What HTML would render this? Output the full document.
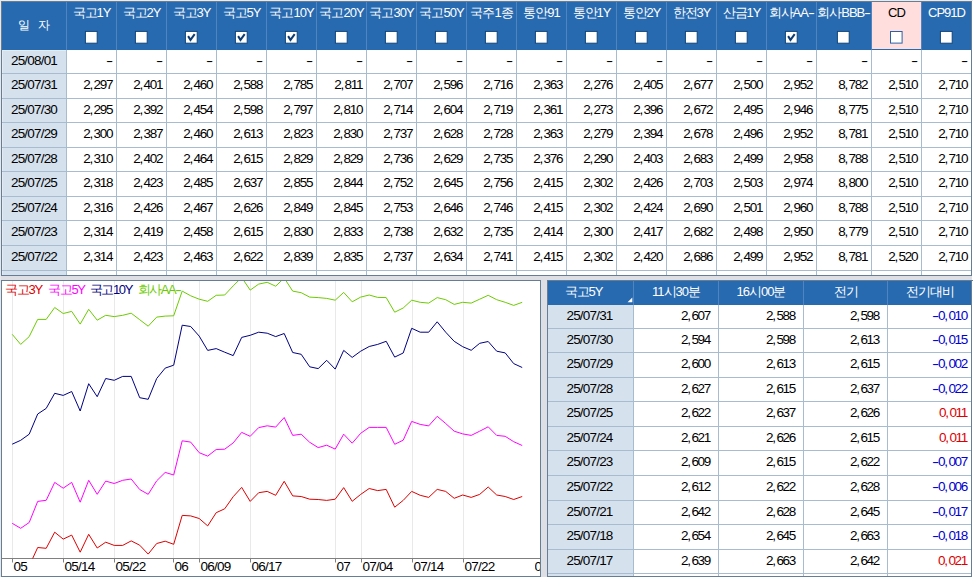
<!DOCTYPE html>
<html lang="ko"><head><meta charset="utf-8"><title>bond yields</title>
<style>
html,body{margin:0;padding:0;}
body{width:973px;height:577px;overflow:hidden;background:#dddfe5;position:relative;
 font-family:"Liberation Sans",sans-serif;font-size:13px;color:#000;}
div,span{position:absolute;box-sizing:border-box;white-space:nowrap;}
.n{font-size:13.5px;letter-spacing:-1.3px;text-align:right;}
.n i{font-style:normal;letter-spacing:0.4px;}
.d{font-size:13.5px;letter-spacing:-0.8px;text-align:center;}
.h{font-size:13px;letter-spacing:-1px;text-align:center;color:#fff;}
b{font-weight:normal;display:inline-block;transform:scaleX(1.6);transform-origin:center;margin:0 2.1px 0 1.1px;}
.neg{color:#0000d0;}
.pos{color:#dd0000;}
svg{position:absolute;overflow:visible;}
.ax{font-size:13.5px;letter-spacing:-0.8px;color:#000;}
.lg{font-size:13px;letter-spacing:-1.4px;}
</style></head><body>

<div style="left:0px;top:0px;width:973px;height:1px;background:#ebebeb;"></div>
<div style="left:0px;top:0px;width:1px;height:577px;background:#e8e8ea;"></div>
<div style="left:1px;top:1px;width:971px;height:275px;background:#fff;border:1px solid #667d96;"></div>
<div style="left:2px;top:2px;width:969px;height:48px;background:#286ab0;"></div>
<div style="left:2px;top:50px;width:64px;height:225px;background:#d5e1ed;"></div>
<div style="left:2px;top:50px;width:64px;height:1px;background:#e4edf6;"></div>
<div style="left:2px;top:50px;width:1px;height:225px;background:#e1ebf5;"></div>
<div style="left:872px;top:2px;width:49px;height:47px;background:#ffdedd;"></div>
<div style="left:66px;top:2px;width:1px;height:48px;background:#4f84c1;"></div>
<div style="left:116px;top:2px;width:1px;height:48px;background:#4f84c1;"></div>
<div style="left:166px;top:2px;width:1px;height:48px;background:#4f84c1;"></div>
<div style="left:216px;top:2px;width:1px;height:48px;background:#4f84c1;"></div>
<div style="left:266px;top:2px;width:1px;height:48px;background:#4f84c1;"></div>
<div style="left:316px;top:2px;width:1px;height:48px;background:#4f84c1;"></div>
<div style="left:366px;top:2px;width:1px;height:48px;background:#4f84c1;"></div>
<div style="left:416px;top:2px;width:1px;height:48px;background:#4f84c1;"></div>
<div style="left:466px;top:2px;width:1px;height:48px;background:#4f84c1;"></div>
<div style="left:516px;top:2px;width:1px;height:48px;background:#4f84c1;"></div>
<div style="left:566px;top:2px;width:1px;height:48px;background:#4f84c1;"></div>
<div style="left:616px;top:2px;width:1px;height:48px;background:#4f84c1;"></div>
<div style="left:666px;top:2px;width:1px;height:48px;background:#4f84c1;"></div>
<div style="left:716px;top:2px;width:1px;height:48px;background:#4f84c1;"></div>
<div style="left:766px;top:2px;width:1px;height:48px;background:#4f84c1;"></div>
<div style="left:816px;top:2px;width:1px;height:48px;background:#4f84c1;"></div>
<div style="left:871px;top:2px;width:1px;height:48px;background:#4f84c1;"></div>
<div style="left:921px;top:2px;width:1px;height:48px;background:#4f84c1;"></div>
<div style="left:66px;top:50px;width:1px;height:225px;background:#a8bcd0;"></div>
<div style="left:116px;top:50px;width:1px;height:225px;background:#a8bcd0;"></div>
<div style="left:166px;top:50px;width:1px;height:225px;background:#a8bcd0;"></div>
<div style="left:216px;top:50px;width:1px;height:225px;background:#a8bcd0;"></div>
<div style="left:266px;top:50px;width:1px;height:225px;background:#a8bcd0;"></div>
<div style="left:316px;top:50px;width:1px;height:225px;background:#a8bcd0;"></div>
<div style="left:366px;top:50px;width:1px;height:225px;background:#a8bcd0;"></div>
<div style="left:416px;top:50px;width:1px;height:225px;background:#a8bcd0;"></div>
<div style="left:466px;top:50px;width:1px;height:225px;background:#a8bcd0;"></div>
<div style="left:516px;top:50px;width:1px;height:225px;background:#a8bcd0;"></div>
<div style="left:566px;top:50px;width:1px;height:225px;background:#a8bcd0;"></div>
<div style="left:616px;top:50px;width:1px;height:225px;background:#a8bcd0;"></div>
<div style="left:666px;top:50px;width:1px;height:225px;background:#a8bcd0;"></div>
<div style="left:716px;top:50px;width:1px;height:225px;background:#a8bcd0;"></div>
<div style="left:766px;top:50px;width:1px;height:225px;background:#a8bcd0;"></div>
<div style="left:816px;top:50px;width:1px;height:225px;background:#a8bcd0;"></div>
<div style="left:871px;top:50px;width:1px;height:225px;background:#a8bcd0;"></div>
<div style="left:921px;top:50px;width:1px;height:225px;background:#a8bcd0;"></div>
<div style="left:2px;top:73px;width:969px;height:1px;background:#a8bcd0;"></div>
<div style="left:2px;top:98px;width:969px;height:1px;background:#a8bcd0;"></div>
<div style="left:2px;top:122px;width:969px;height:1px;background:#a8bcd0;"></div>
<div style="left:2px;top:147px;width:969px;height:1px;background:#a8bcd0;"></div>
<div style="left:2px;top:171px;width:969px;height:1px;background:#a8bcd0;"></div>
<div style="left:2px;top:196px;width:969px;height:1px;background:#a8bcd0;"></div>
<div style="left:2px;top:220px;width:969px;height:1px;background:#a8bcd0;"></div>
<div style="left:2px;top:245px;width:969px;height:1px;background:#a8bcd0;"></div>
<div style="left:2px;top:270px;width:969px;height:1px;background:#a8bcd0;"></div>
<div class="h" style="left:2px;top:2px;width:64px;height:48px;line-height:46px;letter-spacing:0.4px;font-size:12px;">일&nbsp; 자</div>
<div class="h" style="left:67px;top:5px;width:49px;height:16px;line-height:16px;color:#fff;">국고1Y</div>
<svg style="left:85.2px;top:31.15px" width="12.6" height="12.6" viewBox="0 0 12.6 12.6"><rect x="0.4" y="0.4" width="11.8" height="11.8" fill="#fff" stroke="#12447a" stroke-width="1"/></svg>
<div class="h" style="left:117px;top:5px;width:49px;height:16px;line-height:16px;color:#fff;">국고2Y</div>
<svg style="left:135.2px;top:31.15px" width="12.6" height="12.6" viewBox="0 0 12.6 12.6"><rect x="0.4" y="0.4" width="11.8" height="11.8" fill="#fff" stroke="#12447a" stroke-width="1"/></svg>
<div class="h" style="left:167px;top:5px;width:49px;height:16px;line-height:16px;color:#fff;">국고3Y</div>
<svg style="left:185.2px;top:31.15px" width="12.6" height="12.6" viewBox="0 0 12.6 12.6"><rect x="0.4" y="0.4" width="11.8" height="11.8" fill="#fff" stroke="#12447a" stroke-width="1"/><path d="M3.1 5.1 L5.5 8.9 L9.7 3.2" fill="none" stroke="#0c3c72" stroke-width="2"/></svg>
<div class="h" style="left:217px;top:5px;width:49px;height:16px;line-height:16px;color:#fff;">국고5Y</div>
<svg style="left:235.2px;top:31.15px" width="12.6" height="12.6" viewBox="0 0 12.6 12.6"><rect x="0.4" y="0.4" width="11.8" height="11.8" fill="#fff" stroke="#12447a" stroke-width="1"/><path d="M3.1 5.1 L5.5 8.9 L9.7 3.2" fill="none" stroke="#0c3c72" stroke-width="2"/></svg>
<div class="h" style="left:267px;top:5px;width:49px;height:16px;line-height:16px;color:#fff;">국고10Y</div>
<svg style="left:285.2px;top:31.15px" width="12.6" height="12.6" viewBox="0 0 12.6 12.6"><rect x="0.4" y="0.4" width="11.8" height="11.8" fill="#fff" stroke="#12447a" stroke-width="1"/><path d="M3.1 5.1 L5.5 8.9 L9.7 3.2" fill="none" stroke="#0c3c72" stroke-width="2"/></svg>
<div class="h" style="left:317px;top:5px;width:49px;height:16px;line-height:16px;color:#fff;">국고20Y</div>
<svg style="left:335.2px;top:31.15px" width="12.6" height="12.6" viewBox="0 0 12.6 12.6"><rect x="0.4" y="0.4" width="11.8" height="11.8" fill="#fff" stroke="#12447a" stroke-width="1"/></svg>
<div class="h" style="left:367px;top:5px;width:49px;height:16px;line-height:16px;color:#fff;">국고30Y</div>
<svg style="left:385.2px;top:31.15px" width="12.6" height="12.6" viewBox="0 0 12.6 12.6"><rect x="0.4" y="0.4" width="11.8" height="11.8" fill="#fff" stroke="#12447a" stroke-width="1"/></svg>
<div class="h" style="left:417px;top:5px;width:49px;height:16px;line-height:16px;color:#fff;">국고50Y</div>
<svg style="left:435.2px;top:31.15px" width="12.6" height="12.6" viewBox="0 0 12.6 12.6"><rect x="0.4" y="0.4" width="11.8" height="11.8" fill="#fff" stroke="#12447a" stroke-width="1"/></svg>
<div class="h" style="left:467px;top:5px;width:49px;height:16px;line-height:16px;color:#fff;">국주1종</div>
<svg style="left:485.2px;top:31.15px" width="12.6" height="12.6" viewBox="0 0 12.6 12.6"><rect x="0.4" y="0.4" width="11.8" height="11.8" fill="#fff" stroke="#12447a" stroke-width="1"/></svg>
<div class="h" style="left:517px;top:5px;width:49px;height:16px;line-height:16px;color:#fff;">통안91</div>
<svg style="left:535.2px;top:31.15px" width="12.6" height="12.6" viewBox="0 0 12.6 12.6"><rect x="0.4" y="0.4" width="11.8" height="11.8" fill="#fff" stroke="#12447a" stroke-width="1"/></svg>
<div class="h" style="left:567px;top:5px;width:49px;height:16px;line-height:16px;color:#fff;">통안1Y</div>
<svg style="left:585.2px;top:31.15px" width="12.6" height="12.6" viewBox="0 0 12.6 12.6"><rect x="0.4" y="0.4" width="11.8" height="11.8" fill="#fff" stroke="#12447a" stroke-width="1"/></svg>
<div class="h" style="left:617px;top:5px;width:49px;height:16px;line-height:16px;color:#fff;">통안2Y</div>
<svg style="left:635.2px;top:31.15px" width="12.6" height="12.6" viewBox="0 0 12.6 12.6"><rect x="0.4" y="0.4" width="11.8" height="11.8" fill="#fff" stroke="#12447a" stroke-width="1"/></svg>
<div class="h" style="left:667px;top:5px;width:49px;height:16px;line-height:16px;color:#fff;">한전3Y</div>
<svg style="left:685.2px;top:31.15px" width="12.6" height="12.6" viewBox="0 0 12.6 12.6"><rect x="0.4" y="0.4" width="11.8" height="11.8" fill="#fff" stroke="#12447a" stroke-width="1"/></svg>
<div class="h" style="left:717px;top:5px;width:49px;height:16px;line-height:16px;color:#fff;">산금1Y</div>
<svg style="left:735.2px;top:31.15px" width="12.6" height="12.6" viewBox="0 0 12.6 12.6"><rect x="0.4" y="0.4" width="11.8" height="11.8" fill="#fff" stroke="#12447a" stroke-width="1"/></svg>
<div class="h" style="left:767px;top:5px;width:49px;height:16px;line-height:16px;color:#fff;">회사AA<b>-</b></div>
<svg style="left:785.2px;top:31.15px" width="12.6" height="12.6" viewBox="0 0 12.6 12.6"><rect x="0.4" y="0.4" width="11.8" height="11.8" fill="#fff" stroke="#12447a" stroke-width="1"/><path d="M3.1 5.1 L5.5 8.9 L9.7 3.2" fill="none" stroke="#0c3c72" stroke-width="2"/></svg>
<div class="h" style="left:817px;top:5px;width:54px;height:16px;line-height:16px;color:#fff;">회사BBB<b>-</b></div>
<svg style="left:836.8px;top:31.15px" width="12.6" height="12.6" viewBox="0 0 12.6 12.6"><rect x="0.4" y="0.4" width="11.8" height="11.8" fill="#fff" stroke="#12447a" stroke-width="1"/></svg>
<div class="h" style="left:872px;top:5px;width:49px;height:16px;line-height:16px;color:#000;">CD</div>
<svg style="left:890.2px;top:31.15px" width="12.6" height="12.6" viewBox="0 0 12.6 12.6"><rect x="0.5" y="0.5" width="11.6" height="11.6" fill="#fff" stroke="#2a62a6" stroke-width="1"/></svg>
<div class="h" style="left:922px;top:5px;width:49px;height:16px;line-height:16px;color:#fff;">CP91D</div>
<svg style="left:940.2px;top:31.15px" width="12.6" height="12.6" viewBox="0 0 12.6 12.6"><rect x="0.4" y="0.4" width="11.8" height="11.8" fill="#fff" stroke="#12447a" stroke-width="1"/></svg>
<div class="d" style="left:2px;top:49px;width:64px;height:23px;line-height:23px;">25/08/01</div>
<div class="n" style="left:67px;top:49px;width:49px;height:23px;line-height:23px;padding-right:3.8px;"><b>-</b></div>
<div class="n" style="left:117px;top:49px;width:49px;height:23px;line-height:23px;padding-right:3.8px;"><b>-</b></div>
<div class="n" style="left:167px;top:49px;width:49px;height:23px;line-height:23px;padding-right:3.8px;"><b>-</b></div>
<div class="n" style="left:217px;top:49px;width:49px;height:23px;line-height:23px;padding-right:3.8px;"><b>-</b></div>
<div class="n" style="left:267px;top:49px;width:49px;height:23px;line-height:23px;padding-right:3.8px;"><b>-</b></div>
<div class="n" style="left:317px;top:49px;width:49px;height:23px;line-height:23px;padding-right:3.8px;"><b>-</b></div>
<div class="n" style="left:367px;top:49px;width:49px;height:23px;line-height:23px;padding-right:3.8px;"><b>-</b></div>
<div class="n" style="left:417px;top:49px;width:49px;height:23px;line-height:23px;padding-right:3.8px;"><b>-</b></div>
<div class="n" style="left:467px;top:49px;width:49px;height:23px;line-height:23px;padding-right:3.8px;"><b>-</b></div>
<div class="n" style="left:517px;top:49px;width:49px;height:23px;line-height:23px;padding-right:3.8px;"><b>-</b></div>
<div class="n" style="left:567px;top:49px;width:49px;height:23px;line-height:23px;padding-right:3.8px;"><b>-</b></div>
<div class="n" style="left:617px;top:49px;width:49px;height:23px;line-height:23px;padding-right:3.8px;"><b>-</b></div>
<div class="n" style="left:667px;top:49px;width:49px;height:23px;line-height:23px;padding-right:3.8px;"><b>-</b></div>
<div class="n" style="left:717px;top:49px;width:49px;height:23px;line-height:23px;padding-right:3.8px;"><b>-</b></div>
<div class="n" style="left:767px;top:49px;width:49px;height:23px;line-height:23px;padding-right:3.8px;"><b>-</b></div>
<div class="n" style="left:817px;top:49px;width:54px;height:23px;line-height:23px;padding-right:3.8px;"><b>-</b></div>
<div class="n" style="left:872px;top:49px;width:49px;height:23px;line-height:23px;padding-right:3.8px;"><b>-</b></div>
<div class="n" style="left:922px;top:49px;width:49px;height:23px;line-height:23px;padding-right:3.8px;"><b>-</b></div>
<div class="d" style="left:2px;top:73px;width:64px;height:24px;line-height:24px;">25/07/31</div>
<div class="n" style="left:67px;top:73px;width:49px;height:24px;line-height:24px;padding-right:3.8px;">2<i>,</i>297</div>
<div class="n" style="left:117px;top:73px;width:49px;height:24px;line-height:24px;padding-right:3.8px;">2<i>,</i>401</div>
<div class="n" style="left:167px;top:73px;width:49px;height:24px;line-height:24px;padding-right:3.8px;">2<i>,</i>460</div>
<div class="n" style="left:217px;top:73px;width:49px;height:24px;line-height:24px;padding-right:3.8px;">2<i>,</i>588</div>
<div class="n" style="left:267px;top:73px;width:49px;height:24px;line-height:24px;padding-right:3.8px;">2<i>,</i>785</div>
<div class="n" style="left:317px;top:73px;width:49px;height:24px;line-height:24px;padding-right:3.8px;">2<i>,</i>811</div>
<div class="n" style="left:367px;top:73px;width:49px;height:24px;line-height:24px;padding-right:3.8px;">2<i>,</i>707</div>
<div class="n" style="left:417px;top:73px;width:49px;height:24px;line-height:24px;padding-right:3.8px;">2<i>,</i>596</div>
<div class="n" style="left:467px;top:73px;width:49px;height:24px;line-height:24px;padding-right:3.8px;">2<i>,</i>716</div>
<div class="n" style="left:517px;top:73px;width:49px;height:24px;line-height:24px;padding-right:3.8px;">2<i>,</i>363</div>
<div class="n" style="left:567px;top:73px;width:49px;height:24px;line-height:24px;padding-right:3.8px;">2<i>,</i>276</div>
<div class="n" style="left:617px;top:73px;width:49px;height:24px;line-height:24px;padding-right:3.8px;">2<i>,</i>405</div>
<div class="n" style="left:667px;top:73px;width:49px;height:24px;line-height:24px;padding-right:3.8px;">2<i>,</i>677</div>
<div class="n" style="left:717px;top:73px;width:49px;height:24px;line-height:24px;padding-right:3.8px;">2<i>,</i>500</div>
<div class="n" style="left:767px;top:73px;width:49px;height:24px;line-height:24px;padding-right:3.8px;">2<i>,</i>952</div>
<div class="n" style="left:817px;top:73px;width:54px;height:24px;line-height:24px;padding-right:3.8px;">8<i>,</i>782</div>
<div class="n" style="left:872px;top:73px;width:49px;height:24px;line-height:24px;padding-right:3.8px;">2<i>,</i>510</div>
<div class="n" style="left:922px;top:73px;width:49px;height:24px;line-height:24px;padding-right:3.8px;">2<i>,</i>710</div>
<div class="d" style="left:2px;top:98px;width:64px;height:23px;line-height:23px;">25/07/30</div>
<div class="n" style="left:67px;top:98px;width:49px;height:23px;line-height:23px;padding-right:3.8px;">2<i>,</i>295</div>
<div class="n" style="left:117px;top:98px;width:49px;height:23px;line-height:23px;padding-right:3.8px;">2<i>,</i>392</div>
<div class="n" style="left:167px;top:98px;width:49px;height:23px;line-height:23px;padding-right:3.8px;">2<i>,</i>454</div>
<div class="n" style="left:217px;top:98px;width:49px;height:23px;line-height:23px;padding-right:3.8px;">2<i>,</i>598</div>
<div class="n" style="left:267px;top:98px;width:49px;height:23px;line-height:23px;padding-right:3.8px;">2<i>,</i>797</div>
<div class="n" style="left:317px;top:98px;width:49px;height:23px;line-height:23px;padding-right:3.8px;">2<i>,</i>810</div>
<div class="n" style="left:367px;top:98px;width:49px;height:23px;line-height:23px;padding-right:3.8px;">2<i>,</i>714</div>
<div class="n" style="left:417px;top:98px;width:49px;height:23px;line-height:23px;padding-right:3.8px;">2<i>,</i>604</div>
<div class="n" style="left:467px;top:98px;width:49px;height:23px;line-height:23px;padding-right:3.8px;">2<i>,</i>719</div>
<div class="n" style="left:517px;top:98px;width:49px;height:23px;line-height:23px;padding-right:3.8px;">2<i>,</i>361</div>
<div class="n" style="left:567px;top:98px;width:49px;height:23px;line-height:23px;padding-right:3.8px;">2<i>,</i>273</div>
<div class="n" style="left:617px;top:98px;width:49px;height:23px;line-height:23px;padding-right:3.8px;">2<i>,</i>396</div>
<div class="n" style="left:667px;top:98px;width:49px;height:23px;line-height:23px;padding-right:3.8px;">2<i>,</i>672</div>
<div class="n" style="left:717px;top:98px;width:49px;height:23px;line-height:23px;padding-right:3.8px;">2<i>,</i>495</div>
<div class="n" style="left:767px;top:98px;width:49px;height:23px;line-height:23px;padding-right:3.8px;">2<i>,</i>946</div>
<div class="n" style="left:817px;top:98px;width:54px;height:23px;line-height:23px;padding-right:3.8px;">8<i>,</i>775</div>
<div class="n" style="left:872px;top:98px;width:49px;height:23px;line-height:23px;padding-right:3.8px;">2<i>,</i>510</div>
<div class="n" style="left:922px;top:98px;width:49px;height:23px;line-height:23px;padding-right:3.8px;">2<i>,</i>710</div>
<div class="d" style="left:2px;top:122px;width:64px;height:24px;line-height:24px;">25/07/29</div>
<div class="n" style="left:67px;top:122px;width:49px;height:24px;line-height:24px;padding-right:3.8px;">2<i>,</i>300</div>
<div class="n" style="left:117px;top:122px;width:49px;height:24px;line-height:24px;padding-right:3.8px;">2<i>,</i>387</div>
<div class="n" style="left:167px;top:122px;width:49px;height:24px;line-height:24px;padding-right:3.8px;">2<i>,</i>460</div>
<div class="n" style="left:217px;top:122px;width:49px;height:24px;line-height:24px;padding-right:3.8px;">2<i>,</i>613</div>
<div class="n" style="left:267px;top:122px;width:49px;height:24px;line-height:24px;padding-right:3.8px;">2<i>,</i>823</div>
<div class="n" style="left:317px;top:122px;width:49px;height:24px;line-height:24px;padding-right:3.8px;">2<i>,</i>830</div>
<div class="n" style="left:367px;top:122px;width:49px;height:24px;line-height:24px;padding-right:3.8px;">2<i>,</i>737</div>
<div class="n" style="left:417px;top:122px;width:49px;height:24px;line-height:24px;padding-right:3.8px;">2<i>,</i>628</div>
<div class="n" style="left:467px;top:122px;width:49px;height:24px;line-height:24px;padding-right:3.8px;">2<i>,</i>728</div>
<div class="n" style="left:517px;top:122px;width:49px;height:24px;line-height:24px;padding-right:3.8px;">2<i>,</i>363</div>
<div class="n" style="left:567px;top:122px;width:49px;height:24px;line-height:24px;padding-right:3.8px;">2<i>,</i>279</div>
<div class="n" style="left:617px;top:122px;width:49px;height:24px;line-height:24px;padding-right:3.8px;">2<i>,</i>394</div>
<div class="n" style="left:667px;top:122px;width:49px;height:24px;line-height:24px;padding-right:3.8px;">2<i>,</i>678</div>
<div class="n" style="left:717px;top:122px;width:49px;height:24px;line-height:24px;padding-right:3.8px;">2<i>,</i>496</div>
<div class="n" style="left:767px;top:122px;width:49px;height:24px;line-height:24px;padding-right:3.8px;">2<i>,</i>952</div>
<div class="n" style="left:817px;top:122px;width:54px;height:24px;line-height:24px;padding-right:3.8px;">8<i>,</i>781</div>
<div class="n" style="left:872px;top:122px;width:49px;height:24px;line-height:24px;padding-right:3.8px;">2<i>,</i>510</div>
<div class="n" style="left:922px;top:122px;width:49px;height:24px;line-height:24px;padding-right:3.8px;">2<i>,</i>710</div>
<div class="d" style="left:2px;top:147px;width:64px;height:23px;line-height:23px;">25/07/28</div>
<div class="n" style="left:67px;top:147px;width:49px;height:23px;line-height:23px;padding-right:3.8px;">2<i>,</i>310</div>
<div class="n" style="left:117px;top:147px;width:49px;height:23px;line-height:23px;padding-right:3.8px;">2<i>,</i>402</div>
<div class="n" style="left:167px;top:147px;width:49px;height:23px;line-height:23px;padding-right:3.8px;">2<i>,</i>464</div>
<div class="n" style="left:217px;top:147px;width:49px;height:23px;line-height:23px;padding-right:3.8px;">2<i>,</i>615</div>
<div class="n" style="left:267px;top:147px;width:49px;height:23px;line-height:23px;padding-right:3.8px;">2<i>,</i>829</div>
<div class="n" style="left:317px;top:147px;width:49px;height:23px;line-height:23px;padding-right:3.8px;">2<i>,</i>829</div>
<div class="n" style="left:367px;top:147px;width:49px;height:23px;line-height:23px;padding-right:3.8px;">2<i>,</i>736</div>
<div class="n" style="left:417px;top:147px;width:49px;height:23px;line-height:23px;padding-right:3.8px;">2<i>,</i>629</div>
<div class="n" style="left:467px;top:147px;width:49px;height:23px;line-height:23px;padding-right:3.8px;">2<i>,</i>735</div>
<div class="n" style="left:517px;top:147px;width:49px;height:23px;line-height:23px;padding-right:3.8px;">2<i>,</i>376</div>
<div class="n" style="left:567px;top:147px;width:49px;height:23px;line-height:23px;padding-right:3.8px;">2<i>,</i>290</div>
<div class="n" style="left:617px;top:147px;width:49px;height:23px;line-height:23px;padding-right:3.8px;">2<i>,</i>403</div>
<div class="n" style="left:667px;top:147px;width:49px;height:23px;line-height:23px;padding-right:3.8px;">2<i>,</i>683</div>
<div class="n" style="left:717px;top:147px;width:49px;height:23px;line-height:23px;padding-right:3.8px;">2<i>,</i>499</div>
<div class="n" style="left:767px;top:147px;width:49px;height:23px;line-height:23px;padding-right:3.8px;">2<i>,</i>958</div>
<div class="n" style="left:817px;top:147px;width:54px;height:23px;line-height:23px;padding-right:3.8px;">8<i>,</i>788</div>
<div class="n" style="left:872px;top:147px;width:49px;height:23px;line-height:23px;padding-right:3.8px;">2<i>,</i>510</div>
<div class="n" style="left:922px;top:147px;width:49px;height:23px;line-height:23px;padding-right:3.8px;">2<i>,</i>710</div>
<div class="d" style="left:2px;top:171px;width:64px;height:24px;line-height:24px;">25/07/25</div>
<div class="n" style="left:67px;top:171px;width:49px;height:24px;line-height:24px;padding-right:3.8px;">2<i>,</i>318</div>
<div class="n" style="left:117px;top:171px;width:49px;height:24px;line-height:24px;padding-right:3.8px;">2<i>,</i>423</div>
<div class="n" style="left:167px;top:171px;width:49px;height:24px;line-height:24px;padding-right:3.8px;">2<i>,</i>485</div>
<div class="n" style="left:217px;top:171px;width:49px;height:24px;line-height:24px;padding-right:3.8px;">2<i>,</i>637</div>
<div class="n" style="left:267px;top:171px;width:49px;height:24px;line-height:24px;padding-right:3.8px;">2<i>,</i>855</div>
<div class="n" style="left:317px;top:171px;width:49px;height:24px;line-height:24px;padding-right:3.8px;">2<i>,</i>844</div>
<div class="n" style="left:367px;top:171px;width:49px;height:24px;line-height:24px;padding-right:3.8px;">2<i>,</i>752</div>
<div class="n" style="left:417px;top:171px;width:49px;height:24px;line-height:24px;padding-right:3.8px;">2<i>,</i>645</div>
<div class="n" style="left:467px;top:171px;width:49px;height:24px;line-height:24px;padding-right:3.8px;">2<i>,</i>756</div>
<div class="n" style="left:517px;top:171px;width:49px;height:24px;line-height:24px;padding-right:3.8px;">2<i>,</i>415</div>
<div class="n" style="left:567px;top:171px;width:49px;height:24px;line-height:24px;padding-right:3.8px;">2<i>,</i>302</div>
<div class="n" style="left:617px;top:171px;width:49px;height:24px;line-height:24px;padding-right:3.8px;">2<i>,</i>426</div>
<div class="n" style="left:667px;top:171px;width:49px;height:24px;line-height:24px;padding-right:3.8px;">2<i>,</i>703</div>
<div class="n" style="left:717px;top:171px;width:49px;height:24px;line-height:24px;padding-right:3.8px;">2<i>,</i>503</div>
<div class="n" style="left:767px;top:171px;width:49px;height:24px;line-height:24px;padding-right:3.8px;">2<i>,</i>974</div>
<div class="n" style="left:817px;top:171px;width:54px;height:24px;line-height:24px;padding-right:3.8px;">8<i>,</i>800</div>
<div class="n" style="left:872px;top:171px;width:49px;height:24px;line-height:24px;padding-right:3.8px;">2<i>,</i>510</div>
<div class="n" style="left:922px;top:171px;width:49px;height:24px;line-height:24px;padding-right:3.8px;">2<i>,</i>710</div>
<div class="d" style="left:2px;top:196px;width:64px;height:23px;line-height:23px;">25/07/24</div>
<div class="n" style="left:67px;top:196px;width:49px;height:23px;line-height:23px;padding-right:3.8px;">2<i>,</i>316</div>
<div class="n" style="left:117px;top:196px;width:49px;height:23px;line-height:23px;padding-right:3.8px;">2<i>,</i>426</div>
<div class="n" style="left:167px;top:196px;width:49px;height:23px;line-height:23px;padding-right:3.8px;">2<i>,</i>467</div>
<div class="n" style="left:217px;top:196px;width:49px;height:23px;line-height:23px;padding-right:3.8px;">2<i>,</i>626</div>
<div class="n" style="left:267px;top:196px;width:49px;height:23px;line-height:23px;padding-right:3.8px;">2<i>,</i>849</div>
<div class="n" style="left:317px;top:196px;width:49px;height:23px;line-height:23px;padding-right:3.8px;">2<i>,</i>845</div>
<div class="n" style="left:367px;top:196px;width:49px;height:23px;line-height:23px;padding-right:3.8px;">2<i>,</i>753</div>
<div class="n" style="left:417px;top:196px;width:49px;height:23px;line-height:23px;padding-right:3.8px;">2<i>,</i>646</div>
<div class="n" style="left:467px;top:196px;width:49px;height:23px;line-height:23px;padding-right:3.8px;">2<i>,</i>746</div>
<div class="n" style="left:517px;top:196px;width:49px;height:23px;line-height:23px;padding-right:3.8px;">2<i>,</i>415</div>
<div class="n" style="left:567px;top:196px;width:49px;height:23px;line-height:23px;padding-right:3.8px;">2<i>,</i>302</div>
<div class="n" style="left:617px;top:196px;width:49px;height:23px;line-height:23px;padding-right:3.8px;">2<i>,</i>424</div>
<div class="n" style="left:667px;top:196px;width:49px;height:23px;line-height:23px;padding-right:3.8px;">2<i>,</i>690</div>
<div class="n" style="left:717px;top:196px;width:49px;height:23px;line-height:23px;padding-right:3.8px;">2<i>,</i>501</div>
<div class="n" style="left:767px;top:196px;width:49px;height:23px;line-height:23px;padding-right:3.8px;">2<i>,</i>960</div>
<div class="n" style="left:817px;top:196px;width:54px;height:23px;line-height:23px;padding-right:3.8px;">8<i>,</i>788</div>
<div class="n" style="left:872px;top:196px;width:49px;height:23px;line-height:23px;padding-right:3.8px;">2<i>,</i>510</div>
<div class="n" style="left:922px;top:196px;width:49px;height:23px;line-height:23px;padding-right:3.8px;">2<i>,</i>710</div>
<div class="d" style="left:2px;top:220px;width:64px;height:24px;line-height:24px;">25/07/23</div>
<div class="n" style="left:67px;top:220px;width:49px;height:24px;line-height:24px;padding-right:3.8px;">2<i>,</i>314</div>
<div class="n" style="left:117px;top:220px;width:49px;height:24px;line-height:24px;padding-right:3.8px;">2<i>,</i>419</div>
<div class="n" style="left:167px;top:220px;width:49px;height:24px;line-height:24px;padding-right:3.8px;">2<i>,</i>458</div>
<div class="n" style="left:217px;top:220px;width:49px;height:24px;line-height:24px;padding-right:3.8px;">2<i>,</i>615</div>
<div class="n" style="left:267px;top:220px;width:49px;height:24px;line-height:24px;padding-right:3.8px;">2<i>,</i>830</div>
<div class="n" style="left:317px;top:220px;width:49px;height:24px;line-height:24px;padding-right:3.8px;">2<i>,</i>833</div>
<div class="n" style="left:367px;top:220px;width:49px;height:24px;line-height:24px;padding-right:3.8px;">2<i>,</i>738</div>
<div class="n" style="left:417px;top:220px;width:49px;height:24px;line-height:24px;padding-right:3.8px;">2<i>,</i>632</div>
<div class="n" style="left:467px;top:220px;width:49px;height:24px;line-height:24px;padding-right:3.8px;">2<i>,</i>735</div>
<div class="n" style="left:517px;top:220px;width:49px;height:24px;line-height:24px;padding-right:3.8px;">2<i>,</i>414</div>
<div class="n" style="left:567px;top:220px;width:49px;height:24px;line-height:24px;padding-right:3.8px;">2<i>,</i>300</div>
<div class="n" style="left:617px;top:220px;width:49px;height:24px;line-height:24px;padding-right:3.8px;">2<i>,</i>417</div>
<div class="n" style="left:667px;top:220px;width:49px;height:24px;line-height:24px;padding-right:3.8px;">2<i>,</i>682</div>
<div class="n" style="left:717px;top:220px;width:49px;height:24px;line-height:24px;padding-right:3.8px;">2<i>,</i>498</div>
<div class="n" style="left:767px;top:220px;width:49px;height:24px;line-height:24px;padding-right:3.8px;">2<i>,</i>950</div>
<div class="n" style="left:817px;top:220px;width:54px;height:24px;line-height:24px;padding-right:3.8px;">8<i>,</i>779</div>
<div class="n" style="left:872px;top:220px;width:49px;height:24px;line-height:24px;padding-right:3.8px;">2<i>,</i>510</div>
<div class="n" style="left:922px;top:220px;width:49px;height:24px;line-height:24px;padding-right:3.8px;">2<i>,</i>710</div>
<div class="d" style="left:2px;top:245px;width:64px;height:24px;line-height:24px;">25/07/22</div>
<div class="n" style="left:67px;top:245px;width:49px;height:24px;line-height:24px;padding-right:3.8px;">2<i>,</i>314</div>
<div class="n" style="left:117px;top:245px;width:49px;height:24px;line-height:24px;padding-right:3.8px;">2<i>,</i>423</div>
<div class="n" style="left:167px;top:245px;width:49px;height:24px;line-height:24px;padding-right:3.8px;">2<i>,</i>463</div>
<div class="n" style="left:217px;top:245px;width:49px;height:24px;line-height:24px;padding-right:3.8px;">2<i>,</i>622</div>
<div class="n" style="left:267px;top:245px;width:49px;height:24px;line-height:24px;padding-right:3.8px;">2<i>,</i>839</div>
<div class="n" style="left:317px;top:245px;width:49px;height:24px;line-height:24px;padding-right:3.8px;">2<i>,</i>835</div>
<div class="n" style="left:367px;top:245px;width:49px;height:24px;line-height:24px;padding-right:3.8px;">2<i>,</i>737</div>
<div class="n" style="left:417px;top:245px;width:49px;height:24px;line-height:24px;padding-right:3.8px;">2<i>,</i>634</div>
<div class="n" style="left:467px;top:245px;width:49px;height:24px;line-height:24px;padding-right:3.8px;">2<i>,</i>741</div>
<div class="n" style="left:517px;top:245px;width:49px;height:24px;line-height:24px;padding-right:3.8px;">2<i>,</i>415</div>
<div class="n" style="left:567px;top:245px;width:49px;height:24px;line-height:24px;padding-right:3.8px;">2<i>,</i>302</div>
<div class="n" style="left:617px;top:245px;width:49px;height:24px;line-height:24px;padding-right:3.8px;">2<i>,</i>420</div>
<div class="n" style="left:667px;top:245px;width:49px;height:24px;line-height:24px;padding-right:3.8px;">2<i>,</i>686</div>
<div class="n" style="left:717px;top:245px;width:49px;height:24px;line-height:24px;padding-right:3.8px;">2<i>,</i>499</div>
<div class="n" style="left:767px;top:245px;width:49px;height:24px;line-height:24px;padding-right:3.8px;">2<i>,</i>952</div>
<div class="n" style="left:817px;top:245px;width:54px;height:24px;line-height:24px;padding-right:3.8px;">8<i>,</i>781</div>
<div class="n" style="left:872px;top:245px;width:49px;height:24px;line-height:24px;padding-right:3.8px;">2<i>,</i>520</div>
<div class="n" style="left:922px;top:245px;width:49px;height:24px;line-height:24px;padding-right:3.8px;">2<i>,</i>710</div>
<div style="left:972px;top:0px;width:1px;height:577px;background:#fff;"></div>
<div style="left:972px;top:0px;width:1px;height:1px;background:#ebebeb;"></div>
<div style="left:1px;top:280px;width:540px;height:297px;background:#fff;border:1px solid #667d96;"></div>
<svg style="left:0;top:0" width="973" height="577" viewBox="0 0 973 577">
<defs><clipPath id="cp"><rect x="2" y="281" width="538" height="277.5"/></clipPath></defs>
<line x1="12.5" y1="281" x2="12.5" y2="558" stroke="#e9e9e9" stroke-width="1"/>
<line x1="12.5" y1="558" x2="12.5" y2="562.5" stroke="#808080" stroke-width="1"/>
<line x1="63.5" y1="281" x2="63.5" y2="558" stroke="#e9e9e9" stroke-width="1"/>
<line x1="63.5" y1="558" x2="63.5" y2="562.5" stroke="#808080" stroke-width="1"/>
<line x1="114.5" y1="281" x2="114.5" y2="558" stroke="#e9e9e9" stroke-width="1"/>
<line x1="114.5" y1="558" x2="114.5" y2="562.5" stroke="#808080" stroke-width="1"/>
<line x1="173.5" y1="281" x2="173.5" y2="558" stroke="#e9e9e9" stroke-width="1"/>
<line x1="173.5" y1="558" x2="173.5" y2="562.5" stroke="#808080" stroke-width="1"/>
<line x1="199.5" y1="281" x2="199.5" y2="558" stroke="#e9e9e9" stroke-width="1"/>
<line x1="199.5" y1="558" x2="199.5" y2="562.5" stroke="#808080" stroke-width="1"/>
<line x1="250.5" y1="281" x2="250.5" y2="558" stroke="#e9e9e9" stroke-width="1"/>
<line x1="250.5" y1="558" x2="250.5" y2="562.5" stroke="#808080" stroke-width="1"/>
<line x1="335.5" y1="281" x2="335.5" y2="558" stroke="#e9e9e9" stroke-width="1"/>
<line x1="335.5" y1="558" x2="335.5" y2="562.5" stroke="#808080" stroke-width="1"/>
<line x1="361.5" y1="281" x2="361.5" y2="558" stroke="#e9e9e9" stroke-width="1"/>
<line x1="361.5" y1="558" x2="361.5" y2="562.5" stroke="#808080" stroke-width="1"/>
<line x1="412.5" y1="281" x2="412.5" y2="558" stroke="#e9e9e9" stroke-width="1"/>
<line x1="412.5" y1="558" x2="412.5" y2="562.5" stroke="#808080" stroke-width="1"/>
<line x1="463.5" y1="281" x2="463.5" y2="558" stroke="#e9e9e9" stroke-width="1"/>
<line x1="463.5" y1="558" x2="463.5" y2="562.5" stroke="#808080" stroke-width="1"/>
<line x1="2" y1="558.5" x2="540" y2="558.5" stroke="#808080" stroke-width="1"/>
<g clip-path="url(#cp)" fill="none" stroke-width="1" stroke-linejoin="round">
<polyline points="12.2,334.3 20.7,344.4 29.2,336.6 37.7,319.4 46.2,319.4 54.7,307.5 63.2,313.5 71.7,311.4 80.2,324.1 88.7,309.3 97.2,320.2 105.7,315.3 114.2,316.6 122.7,315.3 131.2,313.2 139.7,319.7 148.2,326.2 156.7,317.1 165.2,316.1 173.7,315.8 182.2,291.1 190.7,295.8 199.2,299.2 207.7,301.3 216.2,295.3 224.7,295.0 233.2,285.9 241.7,277.5 250.2,290.1 258.7,284.1 267.2,282.3 275.7,286.2 284.2,278.0 292.7,291.1 301.2,292.7 309.7,297.1 318.2,297.6 326.7,298.4 335.2,300.2 343.7,292.4 352.2,301.8 360.7,297.1 369.2,295.0 377.7,297.4 386.2,297.6 394.7,312.2 403.2,308.0 411.7,300.2 420.2,302.3 428.7,303.1 437.2,297.6 445.7,299.7 454.2,304.4 462.7,302.3 471.2,303.1 479.7,299.2 488.2,295.3 496.7,299.7 505.2,302.3 513.7,305.4 522.2,302.3" stroke="#6ccb00"/>
<polyline points="12.2,444.2 20.7,440.3 29.2,434.2 37.7,414.0 46.2,408.4 54.7,393.3 63.2,395.4 71.7,391.5 80.2,411.0 88.7,383.7 97.2,396.7 105.7,378.5 114.2,380.3 122.7,376.4 131.2,376.4 139.7,397.7 148.2,399.3 156.7,378.5 165.2,368.1 173.7,365.2 182.2,325.2 190.7,326.5 199.2,336.1 207.7,350.4 216.2,348.6 224.7,352.2 233.2,355.6 241.7,337.4 250.2,335.3 258.7,332.2 267.2,333.2 275.7,336.6 284.2,333.5 292.7,352.5 301.2,354.3 309.7,366.8 318.2,368.6 326.7,360.3 335.2,369.1 343.7,350.4 352.2,357.4 360.7,351.2 369.2,346.5 377.7,344.4 386.2,341.3 394.7,357.1 403.2,353.0 411.7,328.3 420.2,332.2 428.7,332.2 437.2,321.8 445.7,332.2 454.2,341.3 462.7,346.7 471.2,350.3 479.7,343.3 488.2,341.5 496.7,351.2 505.2,352.9 513.7,363.6 522.2,367.5" stroke="#000080"/>
<polyline points="12.2,523.3 20.7,528.3 29.2,522.5 37.7,501.4 46.2,500.3 54.7,482.4 63.2,488.2 71.7,482.4 80.2,502.2 88.7,480.3 97.2,494.3 105.7,481.1 114.2,483.5 122.7,480.3 131.2,479.0 139.7,489.5 148.2,494.3 156.7,480.8 165.2,472.4 173.7,475.0 182.2,440.8 190.7,442.1 199.2,452.7 207.7,456.1 216.2,449.5 224.7,449.2 233.2,442.9 241.7,432.4 250.2,436.3 258.7,427.6 267.2,425.8 275.7,427.1 284.2,417.5 292.7,435.4 301.2,434.2 309.7,442.3 318.2,447.6 326.7,445.2 335.2,449.1 343.7,434.2 352.2,443.2 360.7,433.3 369.2,427.4 377.7,427.4 386.2,427.4 394.7,444.3 403.2,440.2 411.7,421.4 420.2,424.4 428.7,425.9 437.2,416.3 445.7,423.5 454.2,431.2 462.7,433.9 471.2,435.4 479.7,431.2 488.2,426.8 496.7,435.4 505.2,436.3 513.7,441.7 522.2,445.5" stroke="#ff00ff"/>
<polyline points="12.2,568.0 20.7,572.0 29.2,566.0 37.7,547.5 46.2,548.3 54.7,532.2 63.2,539.1 71.7,535.1 80.2,552.2 88.7,534.3 97.2,548.0 105.7,542.2 114.2,545.4 122.7,545.4 131.2,540.9 139.7,545.2 148.2,554.1 156.7,543.5 165.2,541.2 173.7,544.3 182.2,515.4 190.7,515.9 199.2,518.5 207.7,525.9 216.2,512.7 224.7,508.8 233.2,496.7 241.7,487.4 250.2,501.4 258.7,492.7 267.2,491.4 275.7,495.3 284.2,481.3 292.7,495.9 301.2,496.5 309.7,499.2 318.2,499.5 326.7,500.4 335.2,499.2 343.7,487.6 352.2,501.3 360.7,494.4 369.2,488.5 377.7,490.6 386.2,489.4 394.7,507.2 403.2,500.4 411.7,491.4 420.2,495.3 428.7,497.4 437.2,489.4 445.7,491.4 454.2,498.3 462.7,495.0 471.2,497.4 479.7,494.4 488.2,487.0 496.7,495.0 505.2,496.5 513.7,499.5 522.2,496.5" stroke="#dc0000"/>
</g></svg>
<div class="lg" style="left:5.4px;top:282px;height:16px;line-height:16px;color:#dc0000;">국고3Y</div>
<div class="lg" style="left:48.2px;top:282px;height:16px;line-height:16px;color:#ff00ff;">국고5Y</div>
<div class="lg" style="left:89.8px;top:282px;height:16px;line-height:16px;color:#000080;">국고10Y</div>
<div class="lg" style="left:137.6px;top:282px;height:16px;line-height:16px;color:#6ccb00;">회사AA<b>-</b></div>
<div class="ax" style="left:13.6px;top:559px;height:16px;line-height:16px;">05</div>
<div class="ax" style="left:64.6px;top:559px;height:16px;line-height:16px;">05/14</div>
<div class="ax" style="left:115.6px;top:559px;height:16px;line-height:16px;">05/22</div>
<div class="ax" style="left:174.6px;top:559px;height:16px;line-height:16px;">06</div>
<div class="ax" style="left:200.6px;top:559px;height:16px;line-height:16px;">06/09</div>
<div class="ax" style="left:251.6px;top:559px;height:16px;line-height:16px;">06/17</div>
<div class="ax" style="left:336.6px;top:559px;height:16px;line-height:16px;">07</div>
<div class="ax" style="left:362.6px;top:559px;height:16px;line-height:16px;">07/04</div>
<div class="ax" style="left:413.6px;top:559px;height:16px;line-height:16px;">07/14</div>
<div class="ax" style="left:464.6px;top:559px;height:16px;line-height:16px;">07/22</div>
<div class="ax" style="left:534.6px;top:559px;height:16px;line-height:16px;width:5.4px;overflow:hidden;">0</div>
<div style="left:547px;top:280px;width:426px;height:297px;background:#fff;border-left:1px solid #667d96;border-top:1px solid #667d96;"></div>
<div style="left:548px;top:281px;width:423px;height:24px;background:#286ab0;"></div>
<div style="left:548px;top:305px;width:85px;height:272px;background:#d5e1ed;"></div>
<div style="left:633px;top:281px;width:1px;height:24px;background:#4f84c1;"></div>
<div style="left:633px;top:305px;width:1px;height:272px;background:#a8bcd0;"></div>
<div style="left:718px;top:281px;width:1px;height:24px;background:#4f84c1;"></div>
<div style="left:718px;top:305px;width:1px;height:272px;background:#a8bcd0;"></div>
<div style="left:803px;top:281px;width:1px;height:24px;background:#4f84c1;"></div>
<div style="left:803px;top:305px;width:1px;height:272px;background:#a8bcd0;"></div>
<div style="left:887px;top:281px;width:1px;height:24px;background:#4f84c1;"></div>
<div style="left:887px;top:305px;width:1px;height:272px;background:#a8bcd0;"></div>
<div style="left:971px;top:281px;width:1px;height:296px;background:#667d96;"></div>
<div style="left:547px;top:576px;width:425px;height:1px;background:#667d96;"></div>
<div style="left:548px;top:328px;width:423px;height:1px;background:#a8bcd0;"></div>
<div style="left:548px;top:352px;width:423px;height:1px;background:#a8bcd0;"></div>
<div style="left:548px;top:377px;width:423px;height:1px;background:#a8bcd0;"></div>
<div style="left:548px;top:401px;width:423px;height:1px;background:#a8bcd0;"></div>
<div style="left:548px;top:426px;width:423px;height:1px;background:#a8bcd0;"></div>
<div style="left:548px;top:450px;width:423px;height:1px;background:#a8bcd0;"></div>
<div style="left:548px;top:475px;width:423px;height:1px;background:#a8bcd0;"></div>
<div style="left:548px;top:500px;width:423px;height:1px;background:#a8bcd0;"></div>
<div style="left:548px;top:524px;width:423px;height:1px;background:#a8bcd0;"></div>
<div style="left:548px;top:549px;width:423px;height:1px;background:#a8bcd0;"></div>
<div style="left:548px;top:573px;width:423px;height:1px;background:#a8bcd0;"></div>
<div class="h" style="left:548px;top:284px;width:85px;height:16px;line-height:16px;padding-right:14px;">국고5Y</div>
<div class="h" style="left:634px;top:284px;width:84px;height:16px;line-height:16px;">11시30분</div>
<div class="h" style="left:719px;top:284px;width:84px;height:16px;line-height:16px;">16시00분</div>
<div class="h" style="left:804px;top:284px;width:83px;height:16px;line-height:16px;">전기</div>
<div class="h" style="left:888px;top:284px;width:83px;height:16px;line-height:16px;">전기대비</div>
<svg style="left:627px;top:297px" width="6" height="6" viewBox="0 0 6 6"><path d="M5.3 0.6 L5.3 5.3 L0.6 5.3 Z" fill="#fff"/></svg>
<div class="d" style="left:548px;top:304px;width:85px;height:23px;line-height:23px;padding-right:2px;">25/07/31</div>
<div class="n" style="left:634px;top:304px;width:84px;height:23px;line-height:23px;padding-right:8px;">2<i>,</i>607</div>
<div class="n" style="left:719px;top:304px;width:84px;height:23px;line-height:23px;padding-right:8px;">2<i>,</i>588</div>
<div class="n" style="left:804px;top:304px;width:83px;height:23px;line-height:23px;padding-right:8px;">2<i>,</i>598</div>
<div class="n neg" style="left:888px;top:304px;width:83px;height:23px;line-height:23px;padding-right:4px;"><b>-</b>0<i>,</i>010</div>
<div class="d" style="left:548px;top:328px;width:85px;height:23px;line-height:23px;padding-right:2px;">25/07/30</div>
<div class="n" style="left:634px;top:328px;width:84px;height:23px;line-height:23px;padding-right:8px;">2<i>,</i>594</div>
<div class="n" style="left:719px;top:328px;width:84px;height:23px;line-height:23px;padding-right:8px;">2<i>,</i>598</div>
<div class="n" style="left:804px;top:328px;width:83px;height:23px;line-height:23px;padding-right:8px;">2<i>,</i>613</div>
<div class="n neg" style="left:888px;top:328px;width:83px;height:23px;line-height:23px;padding-right:4px;"><b>-</b>0<i>,</i>015</div>
<div class="d" style="left:548px;top:352px;width:85px;height:24px;line-height:24px;padding-right:2px;">25/07/29</div>
<div class="n" style="left:634px;top:352px;width:84px;height:24px;line-height:24px;padding-right:8px;">2<i>,</i>600</div>
<div class="n" style="left:719px;top:352px;width:84px;height:24px;line-height:24px;padding-right:8px;">2<i>,</i>613</div>
<div class="n" style="left:804px;top:352px;width:83px;height:24px;line-height:24px;padding-right:8px;">2<i>,</i>615</div>
<div class="n neg" style="left:888px;top:352px;width:83px;height:24px;line-height:24px;padding-right:4px;"><b>-</b>0<i>,</i>002</div>
<div class="d" style="left:548px;top:377px;width:85px;height:23px;line-height:23px;padding-right:2px;">25/07/28</div>
<div class="n" style="left:634px;top:377px;width:84px;height:23px;line-height:23px;padding-right:8px;">2<i>,</i>627</div>
<div class="n" style="left:719px;top:377px;width:84px;height:23px;line-height:23px;padding-right:8px;">2<i>,</i>615</div>
<div class="n" style="left:804px;top:377px;width:83px;height:23px;line-height:23px;padding-right:8px;">2<i>,</i>637</div>
<div class="n neg" style="left:888px;top:377px;width:83px;height:23px;line-height:23px;padding-right:4px;"><b>-</b>0<i>,</i>022</div>
<div class="d" style="left:548px;top:401px;width:85px;height:24px;line-height:24px;padding-right:2px;">25/07/25</div>
<div class="n" style="left:634px;top:401px;width:84px;height:24px;line-height:24px;padding-right:8px;">2<i>,</i>622</div>
<div class="n" style="left:719px;top:401px;width:84px;height:24px;line-height:24px;padding-right:8px;">2<i>,</i>637</div>
<div class="n" style="left:804px;top:401px;width:83px;height:24px;line-height:24px;padding-right:8px;">2<i>,</i>626</div>
<div class="n pos" style="left:888px;top:401px;width:83px;height:24px;line-height:24px;padding-right:4px;">0<i>,</i>011</div>
<div class="d" style="left:548px;top:426px;width:85px;height:23px;line-height:23px;padding-right:2px;">25/07/24</div>
<div class="n" style="left:634px;top:426px;width:84px;height:23px;line-height:23px;padding-right:8px;">2<i>,</i>621</div>
<div class="n" style="left:719px;top:426px;width:84px;height:23px;line-height:23px;padding-right:8px;">2<i>,</i>626</div>
<div class="n" style="left:804px;top:426px;width:83px;height:23px;line-height:23px;padding-right:8px;">2<i>,</i>615</div>
<div class="n pos" style="left:888px;top:426px;width:83px;height:23px;line-height:23px;padding-right:4px;">0<i>,</i>011</div>
<div class="d" style="left:548px;top:450px;width:85px;height:24px;line-height:24px;padding-right:2px;">25/07/23</div>
<div class="n" style="left:634px;top:450px;width:84px;height:24px;line-height:24px;padding-right:8px;">2<i>,</i>609</div>
<div class="n" style="left:719px;top:450px;width:84px;height:24px;line-height:24px;padding-right:8px;">2<i>,</i>615</div>
<div class="n" style="left:804px;top:450px;width:83px;height:24px;line-height:24px;padding-right:8px;">2<i>,</i>622</div>
<div class="n neg" style="left:888px;top:450px;width:83px;height:24px;line-height:24px;padding-right:4px;"><b>-</b>0<i>,</i>007</div>
<div class="d" style="left:548px;top:475px;width:85px;height:24px;line-height:24px;padding-right:2px;">25/07/22</div>
<div class="n" style="left:634px;top:475px;width:84px;height:24px;line-height:24px;padding-right:8px;">2<i>,</i>612</div>
<div class="n" style="left:719px;top:475px;width:84px;height:24px;line-height:24px;padding-right:8px;">2<i>,</i>622</div>
<div class="n" style="left:804px;top:475px;width:83px;height:24px;line-height:24px;padding-right:8px;">2<i>,</i>628</div>
<div class="n neg" style="left:888px;top:475px;width:83px;height:24px;line-height:24px;padding-right:4px;"><b>-</b>0<i>,</i>006</div>
<div class="d" style="left:548px;top:500px;width:85px;height:23px;line-height:23px;padding-right:2px;">25/07/21</div>
<div class="n" style="left:634px;top:500px;width:84px;height:23px;line-height:23px;padding-right:8px;">2<i>,</i>642</div>
<div class="n" style="left:719px;top:500px;width:84px;height:23px;line-height:23px;padding-right:8px;">2<i>,</i>628</div>
<div class="n" style="left:804px;top:500px;width:83px;height:23px;line-height:23px;padding-right:8px;">2<i>,</i>645</div>
<div class="n neg" style="left:888px;top:500px;width:83px;height:23px;line-height:23px;padding-right:4px;"><b>-</b>0<i>,</i>017</div>
<div class="d" style="left:548px;top:524px;width:85px;height:24px;line-height:24px;padding-right:2px;">25/07/18</div>
<div class="n" style="left:634px;top:524px;width:84px;height:24px;line-height:24px;padding-right:8px;">2<i>,</i>654</div>
<div class="n" style="left:719px;top:524px;width:84px;height:24px;line-height:24px;padding-right:8px;">2<i>,</i>645</div>
<div class="n" style="left:804px;top:524px;width:83px;height:24px;line-height:24px;padding-right:8px;">2<i>,</i>663</div>
<div class="n neg" style="left:888px;top:524px;width:83px;height:24px;line-height:24px;padding-right:4px;"><b>-</b>0<i>,</i>018</div>
<div class="d" style="left:548px;top:549px;width:85px;height:23px;line-height:23px;padding-right:2px;">25/07/17</div>
<div class="n" style="left:634px;top:549px;width:84px;height:23px;line-height:23px;padding-right:8px;">2<i>,</i>639</div>
<div class="n" style="left:719px;top:549px;width:84px;height:23px;line-height:23px;padding-right:8px;">2<i>,</i>663</div>
<div class="n" style="left:804px;top:549px;width:83px;height:23px;line-height:23px;padding-right:8px;">2<i>,</i>642</div>
<div class="n pos" style="left:888px;top:549px;width:83px;height:23px;line-height:23px;padding-right:4px;">0<i>,</i>021</div>
</body></html>
